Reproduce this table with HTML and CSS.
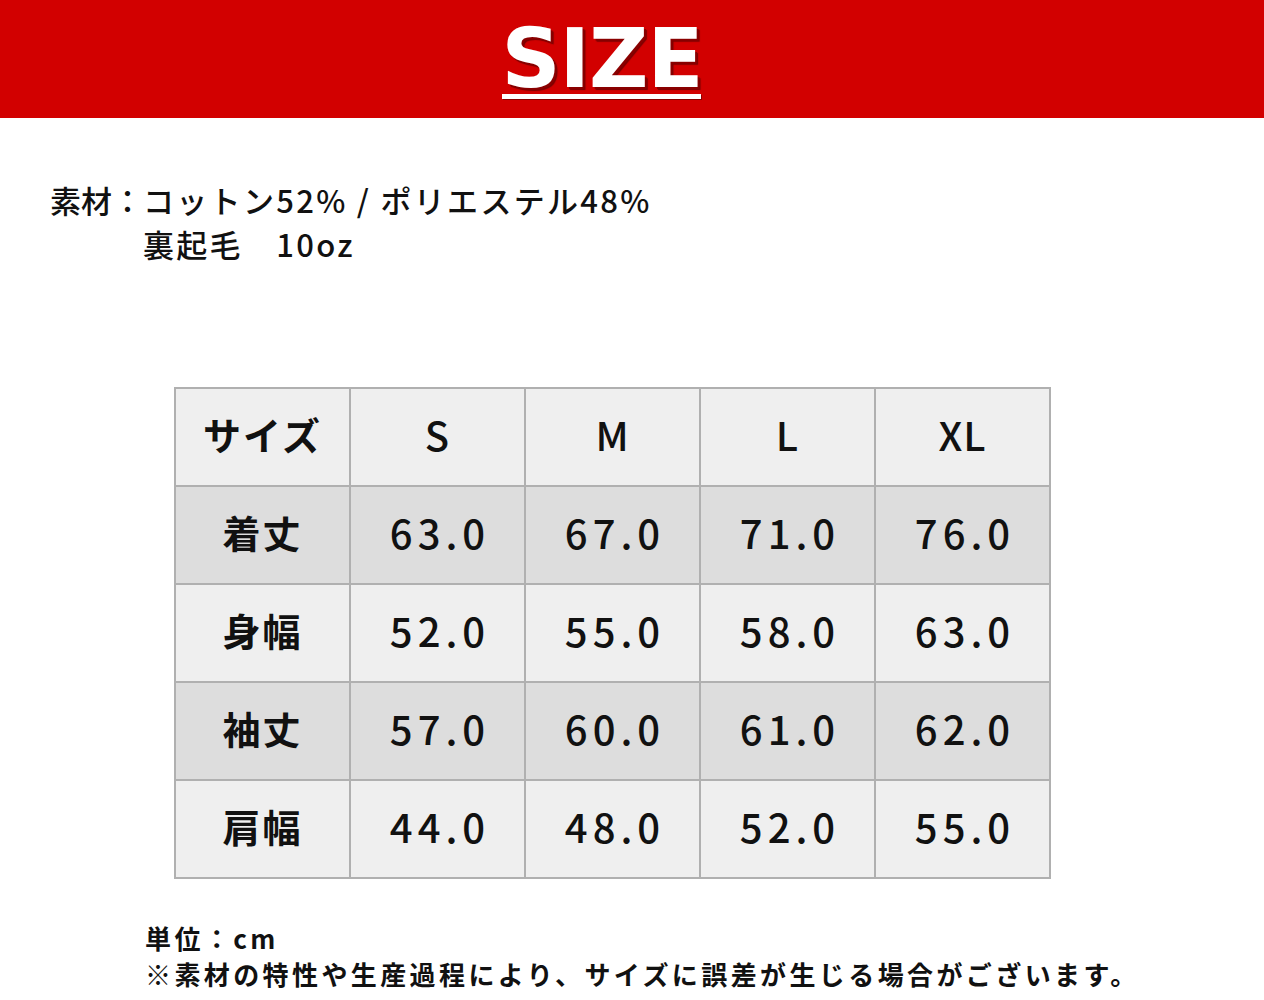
FILE: index.html
```html
<!DOCTYPE html>
<html lang="ja">
<head>
<meta charset="utf-8">
<link rel="stylesheet" href="styles.css">
</head>
<body>
<header class="banner">
  <div class="title-wrap">
    <h1 class="title">SIZE</h1>
    <div class="title-rule"></div>
  </div>
</header>
<section class="material">
  <div class="mat-row"><span class="mat-label">素材：</span><span>コットン52% / ポリエステル48%</span></div>
  <div class="mat-row"><span class="mat-label"></span><span>裏起毛　10oz</span></div>
</section>
<section class="table-wrap">
  <table class="size-table">
    <tr class="row-head"><td>サイズ</td><td class="size">S</td><td class="size">M</td><td class="size">L</td><td class="size">XL</td></tr>
    <tr class="row-dark"><td>着丈</td><td class="num">63.0</td><td class="num">67.0</td><td class="num">71.0</td><td class="num">76.0</td></tr>
    <tr class="row-light"><td>身幅</td><td class="num">52.0</td><td class="num">55.0</td><td class="num">58.0</td><td class="num">63.0</td></tr>
    <tr class="row-dark"><td>袖丈</td><td class="num">57.0</td><td class="num">60.0</td><td class="num">61.0</td><td class="num">62.0</td></tr>
    <tr class="row-light"><td>肩幅</td><td class="num">44.0</td><td class="num">48.0</td><td class="num">52.0</td><td class="num">55.0</td></tr>
  </table>
</section>
<section class="notes">
  <p class="note">単位：cm</p>
  <p class="note">※素材の特性や生産過程により、サイズに誤差が生じる場合がございます。</p>
</section>
</body>
</html>
```
FILE: styles.css
```css
html, body {
  margin: 0;
  padding: 0;
  background: #ffffff;
}
body {
  width: 1264px;
  height: 1000px;
  overflow: hidden;
  font-family: "Noto Sans CJK JP", "Noto Sans", sans-serif;
  color: #111;
}
.banner {
  height: 118px;
  background: #d20000;
  display: flex;
  justify-content: center;
  padding-right: 60px;
  box-sizing: border-box;
}
.title-wrap {
  display: flex;
  flex-direction: column;
  align-items: center;
  margin-top: 19px;
}
.title {
  margin: 0;
  font-family: "DejaVu Sans", sans-serif;
  font-weight: 700;
  font-size: 82px;
  line-height: 80px;
  color: #ffffff;
  letter-spacing: -1px;
  text-shadow: 2px 2px 0 #8a0000, 3px 3px 1px #7a0000;
}
.title-rule {
  width: 199px;
  height: 5px;
  background: #ffffff;
  margin-top: -5px;
  box-shadow: 1px 1px 0 #8a0000;
}
.material {
  padding: 60px 0 0 50px;
  font-size: 31px;
  line-height: 44px;
  font-weight: 500;
  letter-spacing: 2.3px;
}
.mat-row {
  display: flex;
}
.mat-label {
  width: 93px;
  letter-spacing: 0;
}
.table-wrap {
  padding: 121px 0 0 174px;
}
.size-table {
  border-collapse: collapse;
  border: 2px solid #c4c4c4;
}
.size-table td {
  width: 173px;
  height: 89px;
  padding: 0 0 7px;
  text-align: center;
  border: 2px solid #b0b0b0;
  font-size: 38px;
  font-weight: 700;
  letter-spacing: 2px;
}
.size-table td.size {
  font-size: 40px;
  font-weight: 500;
  letter-spacing: 1px;
}
.size-table td.num {
  font-size: 40px;
  font-weight: 500;
  letter-spacing: 5px;
  text-indent: 5px;
}
.row-head td,
.row-light td {
  background: #efefef;
}
.row-dark td {
  background: #dddddd;
}
.notes {
  padding: 41px 0 0 145px;
}
.note {
  margin: 0;
  font-size: 26px;
  line-height: 36px;
  font-weight: 700;
  letter-spacing: 3.4px;
}
```
